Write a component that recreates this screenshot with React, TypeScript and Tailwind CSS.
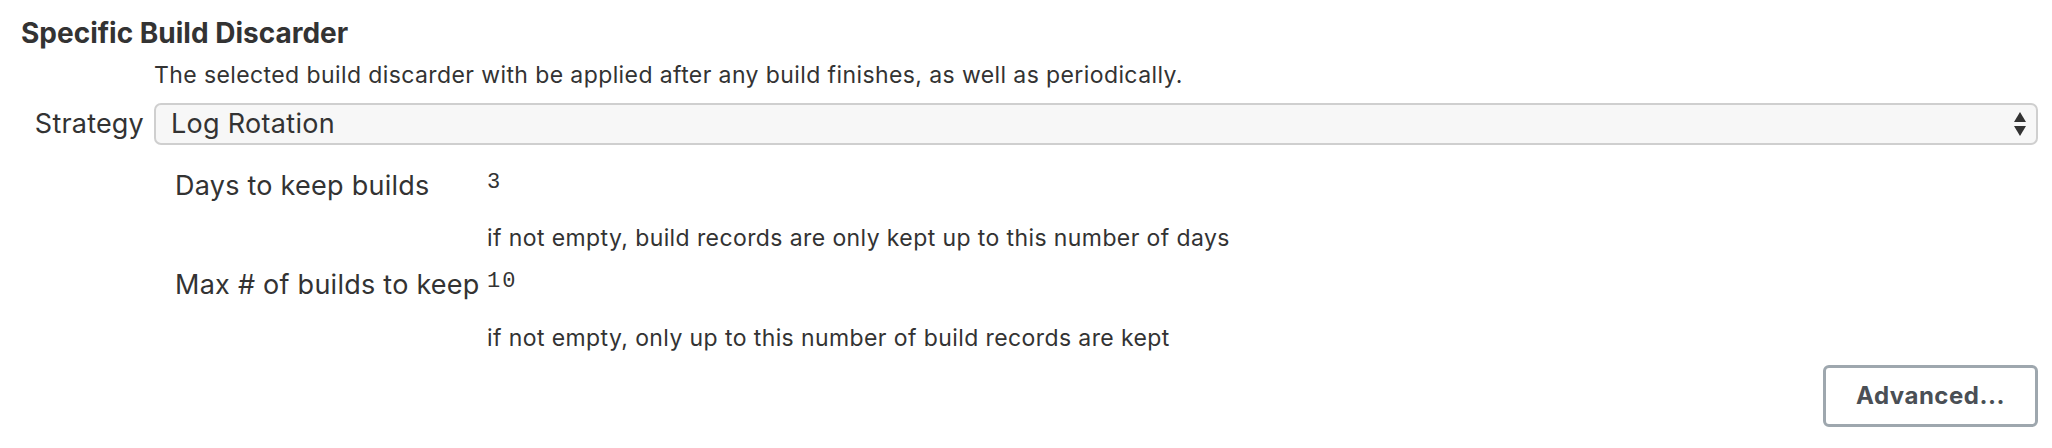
const fieldRows = [
  {
    label: "Days to keep builds",
    value: "3",
    help: "if not empty, build records are only kept up to this number of days",
  },
  {
    label: "Max # of builds to keep",
    value: "10",
    help: "if not empty, only up to this number of build records are kept",
  },
];

const SelectArrows = () => (
  <svg width="12" height="24" viewBox="0 0 12 24" className="shrink-0">
    <path d="M6 0 L12 10 L0 10 Z" fill="#333" />
    <path d="M0 14 L12 14 L6 24 Z" fill="#333" />
  </svg>
);

export default function App() {
  return (
    <div
      className="w-[2052px] h-[448px] bg-white text-[#333] pl-[21px] pr-[14px] overflow-hidden"
      style={{ fontFamily: "Inter, 'Noto Sans', sans-serif" }}
    >
      <h3 className="mt-[15px] h-[36px] leading-[36px] text-[28px] font-bold text-[#333]">
        Specific Build Discarder
      </h3>

      <p className="mt-[9px] ml-[133px] h-[30px] leading-[30px] text-[23px] tracking-[0.4px]">
        The selected build discarder with be applied after any build finishes, as well as periodically.
      </p>

      {/* Strategy */}
      <div className="mt-[13px] flex items-center">
        <div className="w-[133px] text-right pr-[10px] text-[27px] leading-[42px] tracking-[0.2px]">Strategy</div>
        <div className="flex-1 h-[42px] flex items-center justify-between rounded-[7px] border-2 border-[#cfcfcf] bg-[#f7f7f7] pl-[15px] pr-[10px]">
          <span className="text-[27px] leading-[40px] tracking-[0.3px]">Log Rotation</span>
          <SelectArrows />
        </div>
      </div>

      {/* nested fields */}
      <div className="ml-[154px]">
        {fieldRows.map((row, i) => (
          <div key={row.label} className={i === 0 ? "mt-[23px]" : "mt-[14px]"}>
            <div className="flex items-start">
              <div className="w-[312px] text-[27px] leading-[36px] tracking-[0.25px]">{row.label}</div>
              <div
                className="text-[22px] leading-[30px] tracking-[2px] text-[#333]"
                style={{ fontFamily: "'Liberation Mono', monospace" }}
              >
                {row.value}
              </div>
            </div>
            <div
              className={`${i === 0 ? "mt-[19px]" : "mt-[20px]"} ml-[312px] h-[30px] leading-[30px] text-[23px] tracking-[0.4px]`}
            >
              {row.help}
            </div>
          </div>
        ))}
      </div>

      <div className="mt-[12px] flex justify-end">
        <button className="h-[62px] w-[215px] rounded-[6px] border-[3px] border-[#9ea7ae] bg-white text-[24px] font-bold text-[#4a4f55] tracking-[0.5px]">
          Advanced...
        </button>
      </div>
    </div>
  );
}
